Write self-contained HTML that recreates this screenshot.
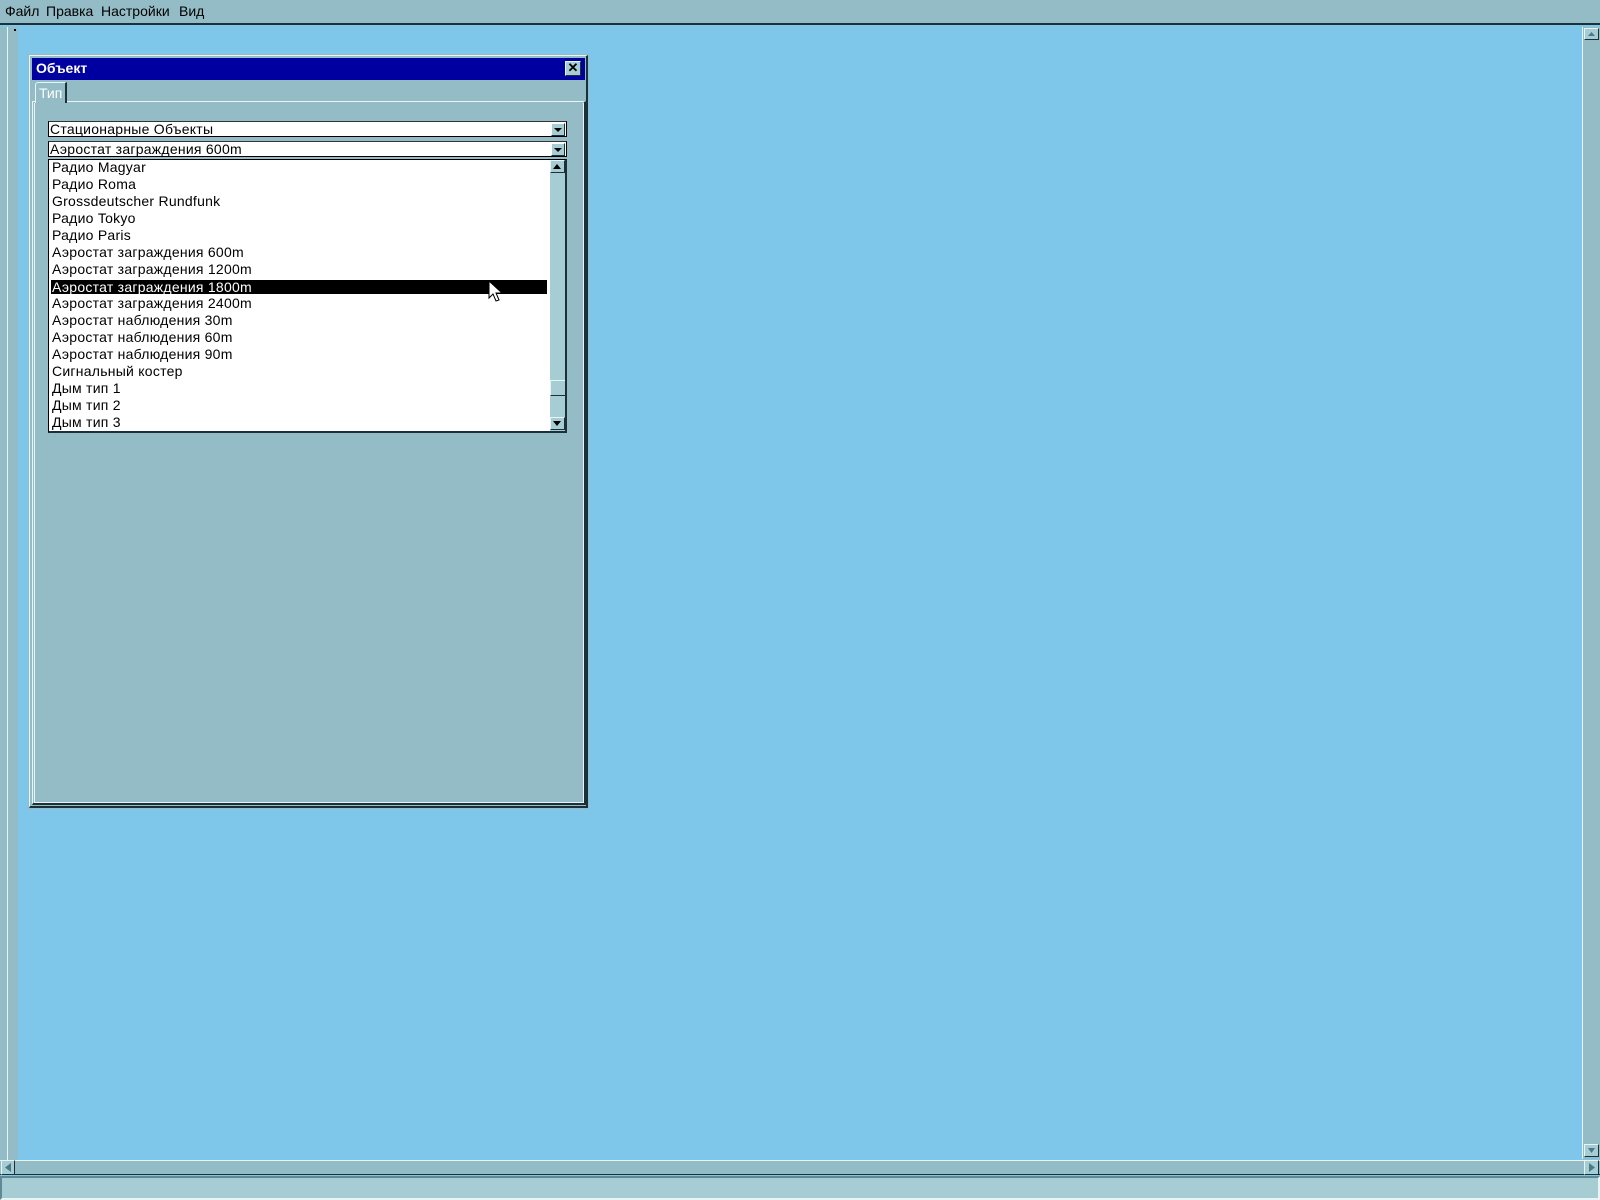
<!DOCTYPE html>
<html><head><meta charset="utf-8"><style>
*{margin:0;padding:0;box-sizing:border-box}
body{width:1600px;height:1200px;background:#7fc7ea;position:relative;overflow:hidden;font-family:"Liberation Sans",sans-serif;font-size:14px;color:#000}
.a{position:absolute}
.gray{background:#93bcc6}
.menu{left:0;top:0;width:1600px;height:25px;background:#93bcc6;border-bottom:2px solid #1c3038}
.menu span{position:absolute;top:3px;font-size:14px}
.bev{border-top:1px solid #e8f4f6;border-left:1px solid #e8f4f6;border-right:1px solid #1c3038;border-bottom:1px solid #1c3038}
.combo{background:#fff;border:1px solid #000;border-top-color:#333;height:16px;font-size:14px;line-height:14px;padding-left:1px;white-space:nowrap;overflow:hidden;letter-spacing:0.25px}
.btn{position:absolute;right:1px;top:1px;width:14px;height:13px;background:#a6ccd4;border-top:1px solid #fff;border-left:1px solid #fff;border-right:1px solid #1c3038;border-bottom:1px solid #1c3038}
.row{position:absolute;left:3px;height:17px;line-height:17px;white-space:nowrap;letter-spacing:0.25px}
</style></head><body>
<div class="a menu"><span style="left:5px">Файл</span><span style="left:46px">Правка</span><span style="left:101px">Настройки</span><span style="left:179px">Вид</span></div>
<div class="a gray" style="left:0;top:27px;width:18px;height:1146px"></div>
<div class="a" style="left:7px;top:27px;width:1px;height:1140px;background:#e8f4f6"></div>
<div class="a" style="left:14px;top:29px;width:2px;height:2px;background:#000"></div>
<div class="a gray" style="left:1582px;top:27px;width:18px;height:1132px;border-left:1px solid #e8f4f6"></div>
<div class="a bev" style="left:1584px;top:28px;width:15px;height:12px;background:#a6ccd4"><svg width="13" height="10" class="a" style="left:0;top:0"><path d="M3 7h7L6.5 3z" fill="#4a7a86"/></svg></div>
<div class="a bev" style="left:1584px;top:1144px;width:15px;height:13px;background:#a6ccd4"><svg width="13" height="11" class="a" style="left:0;top:0"><path d="M3 3h7L6.5 8z" fill="#4a7a86"/></svg></div>
<div class="a gray" style="left:0;top:1160px;width:1600px;height:15px;border-top:1px solid #e8f4f6;border-bottom:1px solid #1c3038"></div>
<div class="a bev" style="left:1px;top:1160px;width:14px;height:15px;background:#a6ccd4"><svg width="12" height="13" class="a" style="left:0;top:0"><path d="M9 2v9L3 6.5z" fill="#4a7a86"/></svg></div>
<div class="a bev" style="left:1584px;top:1160px;width:15px;height:15px;background:#a6ccd4"><svg width="13" height="13" class="a" style="left:0;top:0"><path d="M4 2v9L10 6.5z" fill="#4a7a86"/></svg></div>
<div class="a" style="left:0;top:1176px;width:1600px;height:24px;background:#a6ccd4;border:2px solid #5f8a94;border-right-color:#e8f4f6;border-bottom-color:#e8f4f6"></div>
<div class="a gray" style="left:29px;top:55px;width:559px;height:753px;border:1px solid #e8f4f6;border-right:2px solid #1c3038;border-bottom:2px solid #1c3038;outline:1px solid #93bcc6"></div>
<div class="a" style="left:32px;top:58px;width:553px;height:22px;background:#0000a0"></div>
<div class="a" style="left:36px;top:60px;color:#fff;font-weight:bold;font-size:14px">Объект</div>
<div class="a bev" style="left:565px;top:61px;width:16px;height:15px;background:#a6ccd4;font-size:13px;font-weight:bold;line-height:12px;text-align:center">✕</div>
<div class="a" style="left:32px;top:101px;width:554px;height:704px;border-top:1px solid #e8f4f6;border-left:1px solid #e8f4f6;border-right:2px solid #1c3038;border-bottom:2px solid #1c3038"></div>
<div class="a" style="left:34px;top:103px;width:550px;height:700px;border-right:1px solid #e8f4f6;border-bottom:1px solid #e8f4f6;border-left:1px solid #e8f4f6"></div>
<div class="a gray" style="left:35px;top:82px;width:32px;height:21px;border-left:1px solid #e8f4f6;border-top:1px solid #e8f4f6;border-right:2px solid #1c3038;border-top-left-radius:3px;color:#fff;padding:2px 0 0 3px;font-size:14px">Тип</div>
<div class="a combo" style="left:48px;top:121px;width:519px">Стационарные Объекты<div class="btn"><svg width="12" height="11" style="position:absolute;left:0;top:0"><path d="M2 4h8L6 8z" fill="#000"/></svg></div></div>
<div class="a combo" style="left:48px;top:141px;width:519px">Аэростат заграждения 600m<div class="btn"><svg width="12" height="11" style="position:absolute;left:0;top:0"><path d="M2 4h8L6 8z" fill="#000"/></svg></div></div>
<div class="a" style="left:48px;top:159px;width:519px;height:274px;background:#fff;border:1px solid #000;border-right:2px solid #1c3038;border-bottom:2px solid #1c3038;overflow:hidden">
<div class="row" style="top:-1px">Радио Magyar</div>
<div class="row" style="top:16px">Радио Roma</div>
<div class="row" style="top:33px">Grossdeutscher Rundfunk</div>
<div class="row" style="top:50px">Радио Tokyo</div>
<div class="row" style="top:67px">Радио Paris</div>
<div class="row" style="top:84px">Аэростат заграждения 600m</div>
<div class="row" style="top:101px">Аэростат заграждения 1200m</div>
<div class="row" style="left:2px;width:496px;height:14px;line-height:14px;top:120px;background:#000;color:#fff;padding-left:1px">Аэростат заграждения 1800m</div>
<div class="row" style="top:135px">Аэростат заграждения 2400m</div>
<div class="row" style="top:152px">Аэростат наблюдения 30m</div>
<div class="row" style="top:169px">Аэростат наблюдения 60m</div>
<div class="row" style="top:186px">Аэростат наблюдения 90m</div>
<div class="row" style="top:203px">Сигнальный костер</div>
<div class="row" style="top:220px">Дым тип 1</div>
<div class="row" style="top:237px">Дым тип 2</div>
<div class="row" style="top:254px">Дым тип 3</div>
<div class="a" style="left:501px;top:0;width:16px;height:272px;background:#a6ccd4"></div>
<div class="a bev" style="left:501px;top:0;width:15px;height:13px;background:#a6ccd4"><svg width="13" height="11" style="position:absolute;left:0;top:0"><path d="M2 8h8L6 3z" fill="#000"/></svg></div>
<div class="a bev" style="left:501px;top:220px;width:16px;height:16px;background:#a6ccd4"></div>
<div class="a bev" style="left:501px;top:257px;width:15px;height:13px;background:#a6ccd4"><svg width="13" height="11" style="position:absolute;left:0;top:0"><path d="M2 3h8L6 8z" fill="#000"/></svg></div>
</div>
<svg class="a" style="left:488px;top:280px" width="16" height="24"><path d="M1 1v17l4-4 3 7 3-1-3-7h6z" fill="#fff" stroke="#000" stroke-width="1"/></svg>
</body></html>
